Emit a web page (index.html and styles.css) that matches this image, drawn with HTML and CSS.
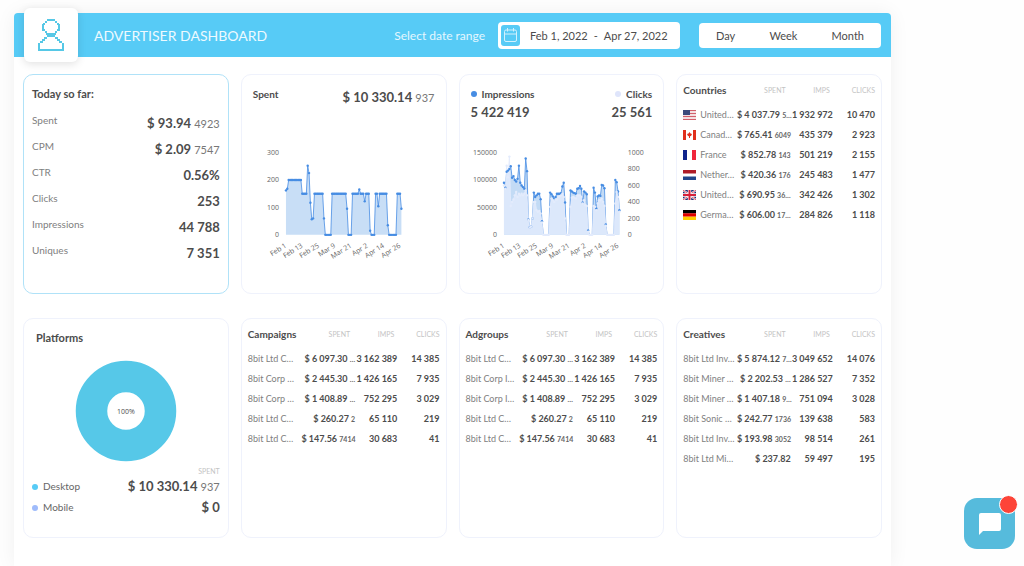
FILE: index.html
```html
<!DOCTYPE html>
<html lang="en">
<head>
<meta charset="utf-8">
<title>Advertiser Dashboard</title>
<link rel="stylesheet" href="styles.css">
</head>
<body>
<main class="panel">
  <header class="topbar">
    <div class="logo">
      <svg width="28" height="34" viewBox="0 0 28 34" fill="none" stroke="#56c8e6" stroke-width="2">
        <path d="M10 2h8M8 4h2M18 4h2M6 6h2M20 6h2M6 6v7M22 6v7M6 12h2M20 12h2M8 14h2M18 14h2M9 16h10M10 18h8M7 20h3M18 20h3M5 22h3M20 22h3M3 24h3M22 24h3M2 25v7M26 25v7M1 32h26"/>
      </svg>
    </div>
    <h1 class="title">ADVERTISER DASHBOARD</h1>
    <label class="range-label" for="range">Select date range</label>
    <button class="range" id="range" type="button">
      <span class="range-icon">
        <svg width="13" height="14" viewBox="0 0 13 14" fill="none" stroke="#d3f1fd" stroke-width="1"><rect x=".5" y="2" width="12" height="11.5" rx="1.5"/><path d="M.5 6h12M3.500 0v3.500M9.500 0v3.500"/></svg>
      </span>
      <span>Feb 1, 2022</span><span class="dash">-</span><span>Apr 27, 2022</span>
    </button>
    <div class="periods">
      <button type="button">Day</button>
      <button type="button">Week</button>
      <button type="button">Month</button>
    </div>
  </header>

  <div class="grid">
    <section class="card today">
      <h2>Today so far:</h2>
      <div class="stat"><span>Spent</span><b>$ 93.94 <small>4923</small></b></div>
      <div class="stat"><span>CPM</span><b>$ 2.09 <small>7547</small></b></div>
      <div class="stat"><span>CTR</span><b>0.56%</b></div>
      <div class="stat"><span>Clicks</span><b>253</b></div>
      <div class="stat"><span>Impressions</span><b>44 788</b></div>
      <div class="stat"><span>Uniques</span><b>7 351</b></div>
    </section>

    <section class="card chart-card">
      <div class="chart-head">
        <h2>Spent</h2>
        <b class="total">$ 10 330.14 <small>937</small></b>
      </div>
      <svg class="chart" id="spent-chart" viewBox="0 0 182 130"></svg>
    </section>

    <section class="card chart-card">
      <div class="chart-head">
        <div><h2 class="key"><i class="dot blue"></i>Impressions</h2><b class="count">5 422 419</b></div>
        <div class="right"><h2 class="key"><i class="dot pale"></i>Clicks</h2><b class="count">25 561</b></div>
      </div>
      <svg class="chart" id="imps-chart" viewBox="0 0 182 130"></svg>
    </section>

    <section class="card table-card">
      <table>
        <colgroup><col class="c-name"><col class="c-spent"><col class="c-num"><col class="c-num"></colgroup>
        <thead><tr><th>Countries</th><th class="mid">SPENT</th><th class="mid2">IMPS</th><th>CLICKS</th></tr></thead>
        <tbody>
          <tr><td><svg class="flag" viewBox="0 0 13 10"><path fill="#f3dfe2" d="M0 0h13v10H0z"/><path stroke="#d2606c" d="M0 .5h13M0 3.500h13M0 6.500h13M0 9.500h13"/><path fill="#3c4a7c" d="M0 0h7v5H0z"/></svg>United…</td><td>$ 4 037.79 <small>5…</small></td><td>1 932 972</td><td>10 470</td></tr>
          <tr><td><svg class="flag" viewBox="0 0 13 10"><path fill="#fff" d="M0 0h13v10H0z"/><path fill="#e0301e" d="M0 0h3v10H0zM10 0h3v10h-3zM6.500 2l1 1.500L9 4 8 6l-1 .3V8H6V6.300L5 6 4 4l1.500-.5z"/></svg>Canad…</td><td>$ 765.41 <small>6049</small></td><td>435 379</td><td>2 923</td></tr>
          <tr><td><svg class="flag" viewBox="0 0 13 10"><path fill="#fff" d="M0 0h13v10H0z"/><path fill="#10248c" d="M0 0h4v10H0z"/><path fill="#f0263c" d="M9 0h4v10H9z"/></svg>France</td><td>$ 852.78 <small>143</small></td><td>501 219</td><td>2 155</td></tr>
          <tr><td><svg class="flag" viewBox="0 0 13 10"><path fill="#fff" d="M0 0h13v10H0z"/><path fill="#ae1c28" d="M0 0h13v3.500H0z"/><path fill="#21468b" d="M0 6.500h13V10H0z"/></svg>Nether…</td><td>$ 420.36 <small>176</small></td><td>245 483</td><td>1 477</td></tr>
          <tr><td><svg class="flag" viewBox="0 0 13 10"><path fill="#1d2f78" d="M0 0h13v10H0z"/><path stroke="#fff" stroke-width="2" d="M0 0l13 10M13 0L0 10"/><path stroke="#d6203a" stroke-width=".8" d="M0 0l13 10M13 0L0 10"/><path stroke="#fff" stroke-width="3.400" d="M6.500 0v10M0 5h13"/><path stroke="#d6203a" stroke-width="2" d="M6.500 0v10M0 5h13"/></svg>United…</td><td>$ 690.95 <small>36…</small></td><td>342 426</td><td>1 302</td></tr>
          <tr><td><svg class="flag" viewBox="0 0 13 10"><path d="M0 0h13v3.400H0z"/><path fill="#e00000" d="M0 3.300h13v3.400H0z"/><path fill="#ffce00" d="M0 6.700h13V10H0z"/></svg>Germa…</td><td>$ 606.00 <small>17…</small></td><td>284 826</td><td>1 118</td></tr>
        </tbody>
      </table>
    </section>

    <section class="card platforms">
      <h2>Platforms</h2>
      <svg class="donut" viewBox="0 0 102 102"><circle cx="51" cy="51" r="34.500" fill="none" stroke="#56c8e8" stroke-width="31.500"/><text x="51" y="53.500" text-anchor="middle">100%</text></svg>
      <div class="cap">SPENT</div>
      <div class="platform"><span class="key"><i class="dot sky"></i>Desktop</span><b>$ 10 330.14 <small>937</small></b></div>
      <div class="platform"><span class="key"><i class="dot violet"></i>Mobile</span><b>$ 0</b></div>
    </section>

    <section class="card table-card">
      <table>
        <colgroup><col class="c-name"><col class="c-spent"><col class="c-num"><col class="c-num"></colgroup>
        <thead><tr><th>Campaigns</th><th class="mid">SPENT</th><th class="mid2">IMPS</th><th>CLICKS</th></tr></thead>
        <tbody>
          <tr><td>8bit Ltd C…</td><td>$ 6 097.30 <small>…</small></td><td>3 162 389</td><td>14 385</td></tr>
          <tr><td>8bit Corp …</td><td>$ 2 445.30 <small>…</small></td><td>1 426 165</td><td>7 935</td></tr>
          <tr><td>8bit Corp …</td><td>$ 1 408.89 <small>…</small></td><td>752 295</td><td>3 029</td></tr>
          <tr><td>8bit Ltd C…</td><td>$ 260.27 <small>2</small></td><td>65 110</td><td>219</td></tr>
          <tr><td>8bit Ltd C…</td><td>$ 147.56 <small>7414</small></td><td>30 683</td><td>41</td></tr>
        </tbody>
      </table>
    </section>

    <section class="card table-card">
      <table>
        <colgroup><col class="c-name"><col class="c-spent"><col class="c-num"><col class="c-num"></colgroup>
        <thead><tr><th>Adgroups</th><th class="mid">SPENT</th><th class="mid2">IMPS</th><th>CLICKS</th></tr></thead>
        <tbody>
          <tr><td>8bit Ltd C…</td><td>$ 6 097.30 <small>…</small></td><td>3 162 389</td><td>14 385</td></tr>
          <tr><td>8bit Corp I…</td><td>$ 2 445.30 <small>…</small></td><td>1 426 165</td><td>7 935</td></tr>
          <tr><td>8bit Corp I…</td><td>$ 1 408.89 <small>…</small></td><td>752 295</td><td>3 029</td></tr>
          <tr><td>8bit Ltd C…</td><td>$ 260.27 <small>2</small></td><td>65 110</td><td>219</td></tr>
          <tr><td>8bit Ltd C…</td><td>$ 147.56 <small>7414</small></td><td>30 683</td><td>41</td></tr>
        </tbody>
      </table>
    </section>

    <section class="card table-card">
      <table>
        <colgroup><col class="c-name"><col class="c-spent"><col class="c-num"><col class="c-num"></colgroup>
        <thead><tr><th>Creatives</th><th class="mid">SPENT</th><th class="mid2">IMPS</th><th>CLICKS</th></tr></thead>
        <tbody>
          <tr><td>8bit Ltd Inv…</td><td>$ 5 874.12 <small>7…</small></td><td>3 049 652</td><td>14 076</td></tr>
          <tr><td>8bit Miner …</td><td>$ 2 202.53 <small>…</small></td><td>1 286 527</td><td>7 352</td></tr>
          <tr><td>8bit Miner …</td><td>$ 1 407.18 <small>9…</small></td><td>751 094</td><td>3 028</td></tr>
          <tr><td>8bit Sonic …</td><td>$ 242.77 <small>1736</small></td><td>139 638</td><td>583</td></tr>
          <tr><td>8bit Ltd Inv…</td><td>$ 193.98 <small>3052</small></td><td>98 514</td><td>261</td></tr>
          <tr><td>8bit Ltd Mi…</td><td>$ 237.82</td><td>59 497</td><td>195</td></tr>
        </tbody>
      </table>
    </section>
  </div>
</main>

<button class="chat" type="button" aria-label="Open chat">
  <svg width="22" height="22" viewBox="0 0 22 22"><path fill="#fff" d="M2 0h18a2 2 0 0 1 2 2v14a2 2 0 0 1-2 2H4l-4 4V2a2 2 0 0 1 2-2z"/></svg>
  <span class="badge"></span>
</button>
<script src="charts.js"></script>
</body>
</html>
```
FILE: styles.css
```css
* { box-sizing: border-box; }

body {
  margin: 0;
  padding: 13px 133px 0 14px;
  background: #fefefe;
  color: #4c4c4c;
  font-family: Lato, "Open Sans", sans-serif;
  font-size: 11px;
}

h1, h2 { margin: 0; font-weight: 400; }
button { border: 0; padding: 0; background: none; color: inherit; font: inherit; }

.panel {
  min-height: calc(100vh - 13px);
  background: #fff;
  border-radius: 4px 4px 0 0;
  box-shadow: 0 0 20px rgba(0, 0, 0, .06);
}

.topbar {
  display: flex;
  align-items: center;
  height: 44px;
  padding: 0 10px;
  background: #57cbf6;
  border-radius: 4px 4px 0 0;
}

.logo {
  display: flex;
  align-items: center;
  justify-content: center;
  width: 54px;
  height: 54px;
  background: #fff;
  border-radius: 6px;
  box-shadow: 0 2px 8px rgba(0, 0, 0, .12);
}

.title { flex: 1; margin-left: 16px; color: #eefaff; font-size: 14px; white-space: nowrap; }
.range-label { margin-right: 13px; color: #e4f7ff; font-size: 12px; white-space: nowrap; }

.range {
  display: flex;
  align-items: center;
  width: 182px;
  height: 27px;
  margin-right: 19px;
  padding: 0 3px;
  background: #fff;
  border-radius: 4px;
  white-space: nowrap;
}
.range-icon {
  display: flex;
  align-items: center;
  justify-content: center;
  width: 19px;
  height: 21px;
  margin-right: 10px;
  background: #57cbf6;
  border-radius: 3px;
}
.dash { margin: 0 6px; }

.periods {
  display: flex;
  justify-content: space-between;
  align-items: center;
  width: 182px;
  height: 25px;
  padding: 0 17px;
  background: #fff;
  border-radius: 4px;
}

.grid {
  display: grid;
  grid-template-columns: repeat(4, minmax(0, 1fr));
  grid-auto-rows: minmax(220px, auto);
  gap: 24px 12px;
  padding: 17px 9px 28px;
}

.card { border: 1px solid #eff2fc; border-radius: 10px; padding: 9px 8px; }
.card h2 { font-size: 11px; font-weight: 700; line-height: 20px; }
.card small { color: #777; font-size: 11px; font-weight: 400; line-height: 1; }

.card.today { border-color: #b0e2f8; }
.today h2 { margin-bottom: 6px; }
.stat, .platform { display: flex; justify-content: space-between; }
.stat { color: #808080; font-size: 10px; line-height: 20px; }
.stat b, .platform b { color: #4c4c4c; font-size: 14px; }
.stat b { line-height: 26px; }

.chart-card { padding: 10px 11px; }
.chart-head { display: flex; justify-content: space-between; min-height: 60px; }
.card .chart-head h2 { font-size: 10px; line-height: 18px; }
.total { font-size: 13px; line-height: 24px; }
.stat b, .platform b, .count { font-size: 13px; }
.count { display: block; line-height: 18px; }
.right { text-align: right; }
.key { display: flex; align-items: center; justify-content: flex-end; }
.chart-head > div:first-child .key { justify-content: flex-start; }
.dot { width: 6px; height: 6px; margin-right: 5px; border-radius: 50%; }
.blue { background: #478de3; }
.pale { background: #dfe5fb; }
.sky { background: #57cbf6; }
.violet { background: #9fbbfb; }

.chart { display: block; width: 100%; }
.chart text { fill: #666; font-family: "Open Sans", sans-serif; font-size: 7px; }

.card.table-card { padding: 6px; }
table { width: 100%; border-collapse: collapse; table-layout: fixed; }
.c-name { width: 28%; }
.c-spent { width: 28%; }
.c-num { width: 22%; }
th, td {
  height: 20px;
  padding: 0;
  font-size: 9px;
  line-height: 19px;
  font-weight: 700;
  text-align: right;
  white-space: nowrap;
}
thead tr { height: 23px; vertical-align: top; }
th { color: #c4c4c4; font-size: 7px; font-weight: 400; }
th:first-child { color: #4c4c4c; font-size: 10px; font-weight: 700; text-align: left; }
th.mid { padding-right: 5px; }
th.mid2 { padding-right: 3px; }
td:first-child { color: #808080; font-weight: 400; text-align: left; }
.card td small { color: #666; font-size: 7px; font-weight: 700; }
.flag { width: 13px; height: 10px; margin-right: 4px; vertical-align: middle; }

.platforms h2 { margin-bottom: 12px; padding-left: 4px; }
.donut { display: block; width: 102px; margin: 0 auto 4px; }
.donut text { fill: #4c4c4c; font-family: "Open Sans", sans-serif; font-size: 7px; }
.cap { color: #c4c4c4; font-size: 7px; line-height: 10px; text-align: right; }
.platform { color: #666; font-size: 10px; line-height: 21px; }

.chat {
  position: fixed;
  right: 9px;
  bottom: 17px;
  display: flex;
  align-items: center;
  justify-content: center;
  width: 51px;
  height: 51px;
  background: #56bbdc;
  border-radius: 13px;
}
.badge {
  position: absolute;
  top: -3px;
  right: -3px;
  width: 19px;
  height: 19px;
  background: #fd4438;
  border: 1px solid #fff;
  border-radius: 50%;
}
```
FILE: charts.js
```js
const NS = "http://www.w3.org/2000/svg";
const LEFT = 33, STEP = 1.36, BASE = 90, HEIGHT = 82.5;
const DAYS = ["Feb 1", "Feb 13", "Feb 25", "Mar 9", "Mar 21", "Apr 2", "Apr 14", "Apr 26"];
const rep = (value, times) => Array(times).fill(value);

const spent = [162, 168, ...rep(200, 10), ...rep(150, 4), 252, 225, 117, 57, 60, ...rep(150, 7), 60,
  ...rep(0, 5), ...rep(150, 11), 95, 0, 0, 0, ...rep(150, 5), 165, 150, 150, 150, 122, 150, 150, 150, 15,
  0, 0, 0, 150, 150, 104, ...rep(150, 6), 35, ...rep(0, 6), 150, 150, 150, 95];

const imps = [95, 86, 115, 117, 120, 125, 104, 107, 100, 97, 102, 126, 95, 90, 87, 84, 139, 116, 28, 14, 15,
  30, 77, 69, 72, 75, 75, 65, 25, 0, 0, 0, 0, 0, 77, 74, 70, 66, 69, 75, 75, 75, 76, 88, 95, 59, 0, 0, 0,
  81, 79, 77, 76, 75, 84, 85, 89, 84, 59, 79, 77, 74, 8, 0, 0, 0, 86, 77, 48, 70, 72, 71, 91, 90, 85, 19,
  0, 0, 0, 0, 0, 0, 100, 96, 79, 45];

const clicks = [600, 560, 840, 700, 950, 350, 400, 430, 480, 520, 460, 500, 480, 500, 480, 500, 540, 480, 180,
  90, 100, 200, 400, 400, 300, 280, 290, 260, 150, 0, 0, 0, 0, 0, 340, 440, 420, 400, 430, 430, 460, 470,
  480, 500, 460, 200, 0, 0, 0, 340, 450, 460, 450, 440, 480, 480, 480, 460, 380, 420, 360, 350, 40, 0, 0, 0,
  350, 340, 300, 380, 420, 420, 440, 400, 350, 110, 0, 0, 0, 0, 0, 0, 380, 520, 460, 280];

function add(svg, tag, attrs, text) {
  const el = document.createElementNS(NS, tag);
  for (const name in attrs) el.setAttribute(name, attrs[name]);
  if (text !== undefined) el.textContent = text;
  svg.append(el);
}

const place = (data, max) =>
  data.map((v, i) => [(LEFT + i * STEP).toFixed(2), (BASE - v / max * HEIGHT).toFixed(2)]);

function area(svg, points, fill) {
  const end = LEFT + (points.length - 1) * STEP;
  add(svg, "polygon", { points: `${LEFT},${BASE} ${points.join(" ")} ${end},${BASE}`, fill });
}

function line(svg, points, stroke) {
  add(svg, "polyline", { points: points.join(" "), fill: "none", stroke, "stroke-width": 0.8 });
}

function dots(svg, points, fill) {
  points.forEach(([cx, cy]) => add(svg, "circle", { cx, cy, r: 1.2, fill }));
}

function axes(svg, left, right) {
  left.forEach((v, i) => add(svg, "text",
    { x: 26, y: BASE + 2.5 - i * HEIGHT / (left.length - 1), "text-anchor": "end" }, v));
  right.forEach((v, i) => add(svg, "text",
    { x: 157, y: BASE + 2.5 - i * HEIGHT / (right.length - 1) }, v));
  DAYS.forEach((day, i) => {
    const x = LEFT + 1 + i * 12 * STEP;
    add(svg, "text", { x, y: 102, "text-anchor": "end", transform: `rotate(-32 ${x} 102)` }, day);
  });
}

const spentChart = document.getElementById("spent-chart");
const spentPoints = place(spent, 300);
area(spentChart, spentPoints, "#c8def6");
line(spentChart, spentPoints, "#478de3");
dots(spentChart, spentPoints, "#478de3");
axes(spentChart, [0, 100, 200, 300], []);

const impsChart = document.getElementById("imps-chart");
const impsPoints = place(imps, 150);
const clickPoints = place(clicks, 1000);
area(impsChart, impsPoints, "#c3dbf5");
line(impsChart, impsPoints, "#478de3");
area(impsChart, clickPoints, "#dce8fb");
line(impsChart, clickPoints, "#e3ebfc");
dots(impsChart, impsPoints.filter((p, i) => imps[i] > 0), "#478de3");
dots(impsChart, clickPoints, "#e3ebfc");
axes(impsChart, [0, 50000, 100000, 150000], [0, 200, 400, 600, 800, 1000]);
```
